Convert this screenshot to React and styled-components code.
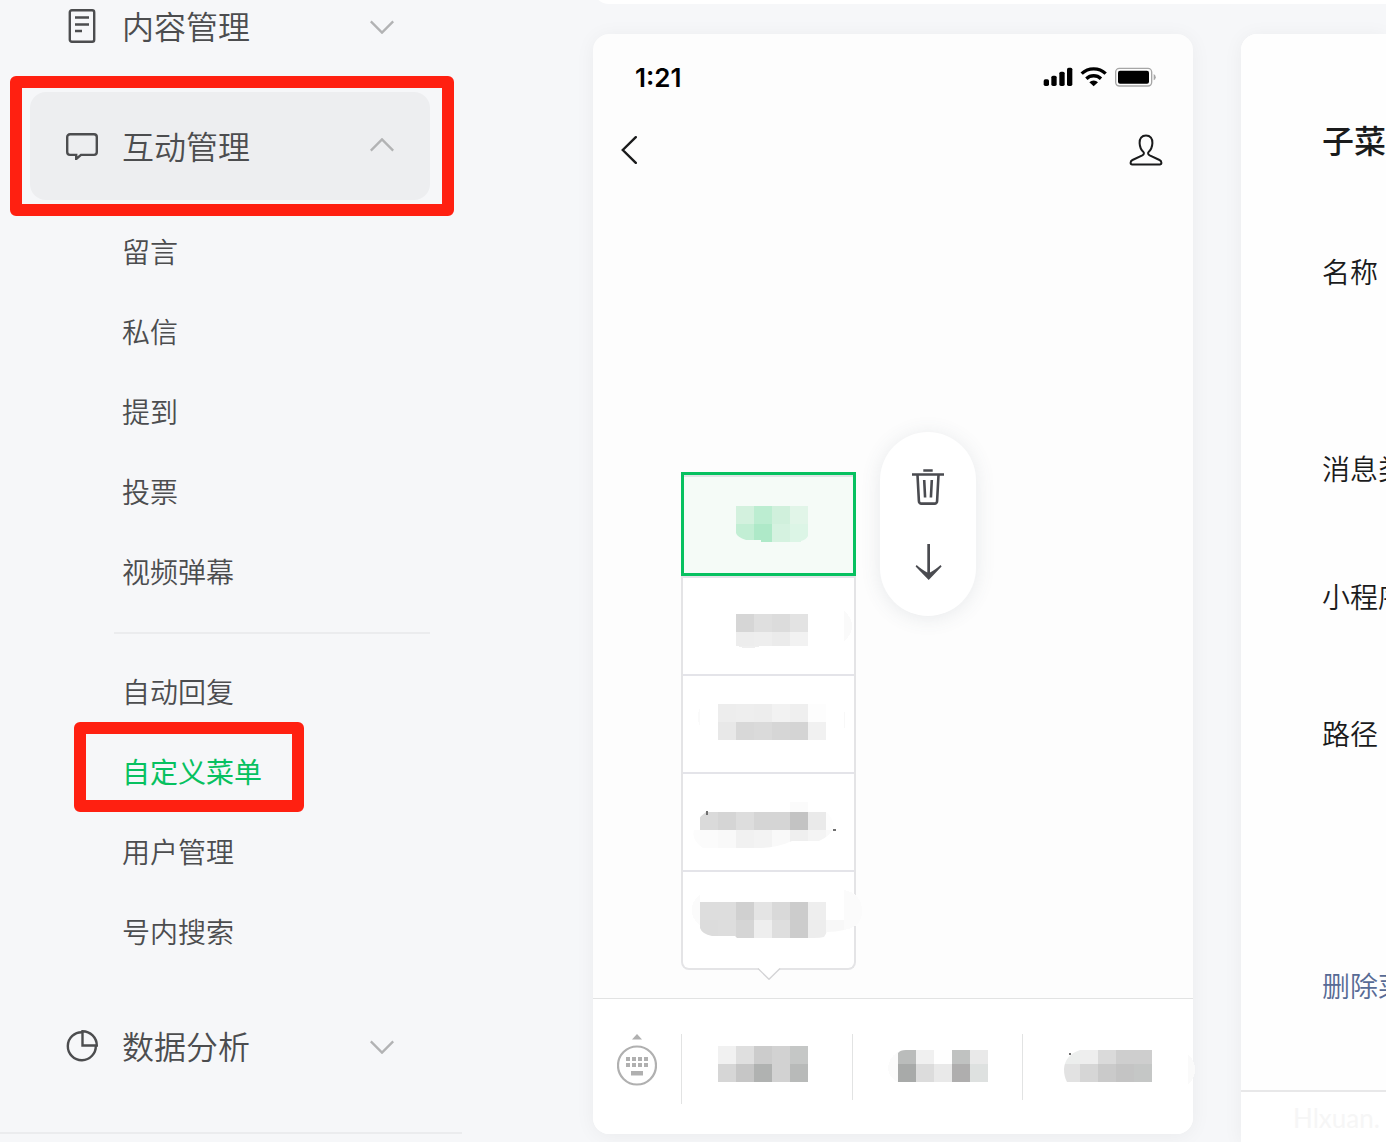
import React, { useState } from "react";
import styled, { createGlobalStyle, css } from "styled-components";

const GlobalStyle = createGlobalStyle`
  *, *::before, *::after {
    box-sizing: border-box;
  }
  body {
    margin: 0;
    background: #f6f7f9;
    color: #1a1b1c;
    font-family: "Noto Sans CJK SC", "Noto Sans", sans-serif;
    font-weight: 350;
    overflow: hidden;
  }
  button {
    padding: 0;
    border: 0;
    background: none;
    color: inherit;
    font: inherit;
    cursor: pointer;
  }
  a {
    color: inherit;
    text-decoration: none;
  }
  ul {
    margin: 0;
    padding: 0;
    list-style: none;
  }
  svg {
    display: block;
    flex: none;
  }
`;

const Page = styled.div`
  display: grid;
  grid-template-columns: 462px minmax(0, 1fr);
  min-height: 100vh;
`;

/* ---------- sidebar ---------- */

const marked = css`
  position: relative;
  &::after {
    content: "";
    position: absolute;
    inset: ${(p) => p.$inset};
    border: 12px solid #ff2011;
    border-radius: 6px;
    pointer-events: none;
  }
`;

const Sidebar = styled.nav`
  display: flex;
  flex-direction: column;
  gap: 12px;
  margin-top: -28px;
  padding: 0 32px 0 30px;
  color: #4c4d4f;
`;

const GroupButton = styled.button`
  display: flex;
  align-items: center;
  gap: 24px;
  width: 100%;
  min-height: 108px;
  padding: 0 36px;
  border-radius: 16px;
  background: ${(p) => (p.$active ? "#edeef0" : "transparent")};
  font-size: 32px;
  line-height: 48px;
  text-align: left;
  ${(p) => p.$inset && marked}
`;

const GroupName = styled.span`
  flex: 1;
  padding-bottom: 2px;
`;

const SubList = styled.ul`
  margin-left: 84px;
  padding: 12px 0 8px;
`;

const SubItem = styled.li`
  & + &[data-split] {
    margin-top: 20px;
    padding-top: 18px;
    border-top: 2px solid #ebecee;
  }
`;

const SubLink = styled.a`
  display: flex;
  align-items: center;
  width: max-content;
  height: 80px;
  padding: 0 8px 2px;
  font-size: 28px;
  line-height: 40px;
  ${(p) => p.$active && "color: #07c160; font-weight: 400;"}
  ${(p) => p.$inset && marked}
`;

const SidebarEnd = styled.hr`
  width: 462px;
  height: 2px;
  margin: 20px 0 0 -30px;
  border: 0;
  background: #ebecee;
`;

/* ---------- main column ---------- */

const Main = styled.main`
  display: flex;
  flex-direction: column;
  gap: 30px;
  padding-left: 131px;
`;

const TopCard = styled.div`
  height: 32px;
  margin-top: -28px;
  border-radius: 0 0 0 16px;
  background: #fff;
`;

const Workspace = styled.div`
  display: flex;
  flex: 1;
  gap: 48px;
`;

const Phone = styled.section`
  display: flex;
  flex: none;
  flex-direction: column;
  width: 600px;
  min-height: calc(100vh - 42px);
  margin-bottom: 8px;
  border-radius: 16px;
  background: #fdfdfd;
  box-shadow: 0 2px 20px rgba(0, 0, 0, 0.05);
`;

const StatusBar = styled.div`
  display: flex;
  align-items: center;
  justify-content: space-between;
  height: 84px;
  padding: 2px 36px 0 42px;
  color: #000;
  font-family: Inter, sans-serif;
  font-size: 26px;
  font-weight: 600;
`;

const PhoneNav = styled.div`
  display: flex;
  align-items: center;
  justify-content: space-between;
  height: 64px;
  padding: 0 30px 0 28px;
`;

const MenuArea = styled.div`
  position: relative;
  width: 175px;
  margin: auto 0 28px 88px;
`;

const Menu = styled.ul`
  border: solid #e4e4e6;
  border-width: 0 2px 2px;
  border-radius: 0 0 8px 8px;
  background: #fff;
`;

const MenuEntry = styled.button`
  display: block;
  width: 100%;
  height: 98px;
  border-top: 2px solid #e4e4e9;
  ${(p) =>
    p.$selected &&
    css`
      width: 175px;
      height: 104px;
      margin: 0 -2px;
      border: 3px solid #07c160;
      background: #f5fbf7;
      box-shadow: inset 0 2px #e0e4e6;
    `}
`;

const MenuTail = styled.svg`
  position: absolute;
  left: 76px;
  bottom: -10px;
`;

const Actions = styled.div`
  position: absolute;
  top: -40px;
  left: 199px;
  display: flex;
  flex-direction: column;
  align-items: center;
  justify-content: space-between;
  width: 96px;
  height: 184px;
  padding: 37px 0 36px;
  border-radius: 48px;
  background: #fff;
  box-shadow: 0 2px 20px rgba(70, 90, 110, 0.12);
`;

const MenuBar = styled.div`
  display: flex;
  min-height: 136px;
  padding-top: 35px;
  border-top: 1px solid #e2e3e3;
  border-radius: 0 0 16px 16px;
  background: #fff;
`;

const KeyboardButton = styled.button`
  width: 88px;
  height: 52px;
  padding-left: 24px;
`;

const BarButton = styled.button`
  flex: 1;
  height: ${(p) => (p.$tall ? 70 : 66)}px;
  border-left: 1px solid #e2e3e3;
`;

/* ---------- settings panel ---------- */

const Panel = styled.section`
  display: flex;
  flex: 1;
  flex-direction: column;
  min-width: 0;
  border-radius: 16px 0 0 0;
  background: #fff;
  box-shadow: 0 2px 20px rgba(0, 0, 0, 0.05);
  white-space: nowrap;
  overflow: hidden;
`;

const PanelBody = styled.div`
  flex: 1;
  padding: 81px 0 0 81px;
  background: #fefefe;
`;

const PanelTitle = styled.h2`
  margin: 0;
  font-size: 32px;
  font-weight: 500;
  line-height: 48px;
`;

const Field = styled.div`
  margin-top: ${(p) => p.$space}px;
  font-size: 28px;
  line-height: 40px;
`;

const DeleteLink = styled.a`
  color: #576b95;
`;

const PanelFoot = styled.div`
  min-height: 52px;
  padding: 8px 0 0 52px;
  border-top: 2px solid #e8e8e9;
  color: #f6f6f6;
  font-family: Lato, sans-serif;
  font-size: 26px;
  font-weight: 400;
  line-height: 36px;
`;

/* ---------- icons ---------- */

const Chevron = ({ up }) => (
  <svg width="24" height="16" viewBox="0 0 24 16" fill="none" stroke="#b2b3b4" strokeWidth="2.4">
    <path d={up ? "M.8 12.600 12 1.400l11.200 11.200" : "M.8 3.400 12 14.600 23.200 3.400"} />
  </svg>
);

const DocIcon = () => (
  <svg width="32" height="34" viewBox="0 0 32 34" fill="none" stroke="currentColor" strokeWidth="2.4">
    <rect x="3.800" y="1.300" width="24.400" height="31.400" rx="2" />
    <path d="M9 8.500h14M9 15.500h14M9 22h7" />
  </svg>
);

const ChatIcon = () => (
  <svg width="32" height="28" viewBox="0 0 32 28" fill="none" stroke="currentColor" strokeWidth="2.4">
    <path d="M4 2.300h24a2.800 2.800 0 0 1 2.800 2.800v15a2.800 2.800 0 0 1-2.800 2.800H15L10.200 27v-4.100H4a2.800 2.800 0 0 1-2.800-2.800v-15A2.800 2.800 0 0 1 4 2.300Z" />
  </svg>
);

const PieIcon = () => (
  <svg width="32" height="32" viewBox="0 0 32 32" fill="none" stroke="currentColor" strokeWidth="2.4">
    <path d="M16.500 2.200A14 14 0 1 0 29.800 15.500" />
    <path d="M16.500 1.200v14.300h14.300A14.300 14.300 0 0 0 16.500 1.200Z" />
  </svg>
);

const StatusIcons = () => (
  <svg width="114" height="20" viewBox="0 0 342 60" role="img" aria-label="status">
    <rect x="2" y="37" width="16" height="20" rx="5" />
    <rect x="25" y="26" width="16" height="31" rx="5" />
    <rect x="49" y="14" width="16" height="43" rx="5" />
    <rect x="72" y="2" width="16" height="55" rx="5" />
    <g fill="none" stroke="#000" strokeWidth="10">
      <path d="M116 20a52 52 0 0 1 72 0" />
      <path d="M130 35a32 32 0 0 1 44 0" />
    </g>
    <path d="M139 46a19 19 0 0 1 26 0L152 58Z" />
    <rect x="218" y="4" width="108" height="53" rx="11" fill="none" stroke="#a6a6a6" strokeWidth="4" />
    <rect x="225" y="11" width="93" height="39" rx="6" />
    <path d="M332 21a9 10 0 0 1 0 19Z" fill="#a6a6a6" />
  </svg>
);

const BackIcon = () => (
  <svg width="16" height="28" viewBox="0 0 16 28" fill="none" stroke="#1a1b1c" strokeWidth="2.400">
    <path d="M14.800 1.200 1.800 14l13 12.800" strokeLinecap="round" />
  </svg>
);

const PersonIcon = () => (
  <svg width="34" height="32" viewBox="0 0 34 32" fill="none" stroke="#1a1b1c" strokeWidth="2">
    <path d="M17 1.500c-4.300 0-6.700 3-6.400 7.600.2 4 1.500 6.700 3.700 8.800 1.100 1.200.7 2.600-1 3.500L3.500 26c-1.400.7-1.900 1.500-1.900 2.800 0 1.300.5 1.700 1.600 1.700h27.600c1.100 0 1.600-.4 1.600-1.700 0-1.300-.5-2.100-1.900-2.800l-9.800-4.600c-1.700-.9-2.100-2.300-1-3.500 2.200-2.100 3.500-4.800 3.700-8.800.3-4.600-2.100-7.600-6.400-7.600Z" />
  </svg>
);

const TrashIcon = () => (
  <svg width="32" height="36" viewBox="0 0 32 36" fill="none" stroke="#4a4b50" strokeWidth="2.600">
    <path d="M11.300 1.500h9.400M0 5.500h32" />
    <path d="m5.500 6 1.400 26a2.500 2.500 0 0 0 2.500 2.600h13.200a2.500 2.500 0 0 0 2.500-2.600L26.500 6" />
    <path d="m12.200 11 .9 17.500M19.800 11l-.9 17.500" />
  </svg>
);

const ArrowIcon = () => (
  <svg width="28" height="36" viewBox="0 0 28 36" fill="#4a4b50">
    <path d="M13.300 0h2.700v28.500c3.500-1.700 7-4.200 10.600-7.500l1 1.400L14.700 36 1.600 22.400l1-1.400c3.600 3.300 7.200 5.800 10.700 7.500Z" />
  </svg>
);

const KeyboardIcon = () => (
  <svg width="40" height="52" viewBox="0 0 40 52" fill="#b0b0b0">
    <path d="M15 5.500 20 0l5 5.500Z" />
    <circle cx="20" cy="31.500" r="19" fill="none" stroke="#b0b0b0" strokeWidth="2.200" />
    {[9, 15, 21, 27].map((x) => (
      <path key={x} d={`M${x} 23h4v4h-4zM${x} 29h4v4h-4z`} />
    ))}
    <path d="M14 37h12v4.500H14z" />
  </svg>
);

/* ---------- blurred labels ---------- */

// every line is [x, y, height, ...colours], one colour for each 18px block
const MENU_LABELS = [
  {
    clip: "M52 30h72v30q-2 4-7 5v1H77v-2H62q-9-3-10-7Z",
    lines: [
      [52, 30, 18, "#d3f1de", "#bcedd1", "#d0f0dc", "#e1f5e8"],
      [52, 48, 18, "#c2eed4", "#aee9c8", "#d5f2e0", "#dcf5e6"],
    ],
  },
  {
    lines: [
      [53, 36, 18, "#d6d6d6", "#dfdfdf", "#dcdcdc", "#e3e3e3"],
      [53, 54, 14, "#ededed", "#eeeeee", "#ebebeb", "#f2f2f2"],
    ],
    blobs: [
      ["M54 68h24q-5 2-12 2t-12-2Z", "#efefef"],
      ["M161 33q8 6 8 15t-8 15Z", "#fafafa"],
    ],
  },
  {
    lines: [
      [35, 28, 18, "#ededed", "#eeeeee", "#ededed", "#f2f2f2", "#efefef", "#fdfdfd"],
      [35, 46, 18, "#e8e8e8", "#d8d8d8", "#dadada", "#d6d6d6", "#d4d4d4", "#f1f1f1"],
    ],
    blobs: [
      ["M17 32q-4 9 0 18Z", "#fafafa"],
      ["M161 36h1v16h-1Z", "#f8f8f8"],
    ],
  },
  {
    clip: "M107 28h18v10h18q6 4 8 14-3 10-15 15h-27q-15 7-35 7H20q-12-8-9-18 2-11 12-18h84Z",
    lines: [
      [107, 28, 10, "#fbfbfb"],
      [17, 38, 18, "#dadada", "#d5d5d5", "#dddddd", "#d5d5d5", "#d5d5d5", "#c3c3c3", "#eaeaea", "#fdfdfd"],
      [-1, 56, 18, "#fcfcfc", "#fbfbfb", "#f9f9f9", "#f1f1f1", "#f3f3f3", "#f9f9f9", "#efefef", "#f4f4f4", "#f9f9f9"],
    ],
    dots: [
      [23, 37, 2, 4],
      [150, 55, 3, 2],
    ],
  },
  {
    clip: "M17 30h126v18h18v10q-8 2-17 2l-3 5q-4 1-10 1H54l-2-2H29q-10-2-12-8Z",
    lines: [
      [17, 30, 18, "#dddddd", "#dddddd", "#d0d0d0", "#e4e4e4", "#d9d9d9", "#cccccc", "#eeeeee"],
      [17, 48, 18, "#dcdcdc", "#dddddd", "#d5d5d5", "#eeeeee", "#dedede", "#cccccc", "#ededed", "#f8f8f8"],
    ],
    blobs: [
      ["M161 18q17 3 18 20t-18 20Z", "#fbfbfb"],
      ["M17 22Q0 38 17 54Z", "#fbfbfb"],
    ],
  },
];

const BAR_LABELS = [
  {
    lines: [
      [36, 10, 18, "#f1f1f1", "#dfdfdf", "#cccccc", "#d2d2d2", "#c5c7c6"],
      [36, 28, 18, "#d6d6d6", "#c6c6c6", "#b0b2b1", "#d2d2d2", "#b8bab9"],
    ],
  },
  {
    lines: [
      [45, 16, 14, "#babcbb", "#f0f0f0", "#fefefe", "#c0c2c1", "#e9e9e9"],
      [45, 30, 18, "#a8aaa9", "#dcdcdc", "#e9e9e9", "#afaeae", "#dee1e0"],
    ],
    blobs: [["M45 18q-10 6-10 17 1 9 10 13Z", "#fbfbfb"]],
    clip: "M45 19q2-3 8-3h82v32H45Z",
  },
  {
    clip: "M129 16v32H44q-3-5-3-13 1-14 16-19Z",
    lines: [
      [39, 16, 14, "#eceeed", "#eeeeee", "#dadada", "#cecece", "#cecece"],
      [39, 30, 18, "#e2e2e2", "#d6d6d6", "#cacaca", "#c4c4c4", "#c5c7c6"],
    ],
    blobs: [["M165 20q7 6 7 15t-7 16Z", "#fafafa"]],
    dots: [[46, 19, 2, 2]],
  },
];

const Mosaic = ({ id, width, height, label }) => (
  <svg width={width} height={height} overflow="visible" shapeRendering="crispEdges" aria-hidden="true">
    {label.clip && (
      <clipPath id={id}>
        <path d={label.clip} />
      </clipPath>
    )}
    {label.blobs?.map(([d, fill]) => (
      <path key={d} d={d} fill={fill} />
    ))}
    <g clipPath={label.clip && `url(#${id})`}>
      {label.lines.map(([x, y, h, ...fills]) =>
        fills.map((fill, i) => (
          <rect key={`${y}-${i}`} x={x + i * 18} y={y} width="18" height={h} fill={fill} />
        ))
      )}
    </g>
    {label.dots?.map(([x, y, w, h]) => (
      <rect key={x} x={x} y={y} width={w} height={h} fill="#707070" />
    ))}
  </svg>
);

const SUB_ITEMS = [
  { name: "留言" },
  { name: "私信" },
  { name: "提到" },
  { name: "投票" },
  { name: "视频弹幕" },
  { name: "自动回复", split: true },
  { name: "自定义菜单", inset: "-10px -34px 0 -40px" },
  { name: "用户管理" },
  { name: "号内搜索" },
];

const App = () => {
  const [current, setCurrent] = useState("自定义菜单");
  const [selected, setSelected] = useState(0);

  return (
    <Page>
      <GlobalStyle />
      <Sidebar>
        <GroupButton type="button">
          <DocIcon />
          <GroupName>内容管理</GroupName>
          <Chevron />
        </GroupButton>
        <div>
          <GroupButton type="button" $active $inset="-16px -24px -16px -20px" aria-expanded="true">
            <ChatIcon />
            <GroupName>互动管理</GroupName>
            <Chevron up />
          </GroupButton>
          <SubList>
            {SUB_ITEMS.map(({ name, split, inset }) => (
              <SubItem key={name} data-split={split}>
                <SubLink href="#" $active={name === current} $inset={inset} onClick={() => setCurrent(name)}>
                  {name}
                </SubLink>
              </SubItem>
            ))}
          </SubList>
        </div>
        <GroupButton type="button">
          <PieIcon />
          <GroupName>数据分析</GroupName>
          <Chevron />
        </GroupButton>
        <SidebarEnd />
      </Sidebar>

      <Main>
        <TopCard />
        <Workspace>
          <Phone>
            <StatusBar>
              <span>1:21</span>
              <StatusIcons />
            </StatusBar>
            <PhoneNav>
              <button type="button" aria-label="返回">
                <BackIcon />
              </button>
              <button type="button" aria-label="账号">
                <PersonIcon />
              </button>
            </PhoneNav>
            <MenuArea>
              <Menu>
                {MENU_LABELS.map((label, i) => (
                  <li key={i}>
                    <MenuEntry
                      type="button"
                      aria-label={`子菜单 ${i + 1}`}
                      $selected={i === selected}
                      onClick={() => setSelected(i)}
                    >
                      <Mosaic id={`menu-${i}`} width={169} height={96} label={label} />
                    </MenuEntry>
                  </li>
                ))}
              </Menu>
              <MenuTail width="24" height="12" viewBox="0 0 24 12">
                <path d="M1 0 12 11 23 0Z" fill="#fff" />
                <path d="M1 .5 12 11.300 23 .5" fill="none" stroke="#d4d4d6" strokeWidth="1.400" />
              </MenuTail>
              <Actions>
                <button type="button" aria-label="删除">
                  <TrashIcon />
                </button>
                <button type="button" aria-label="下移">
                  <ArrowIcon />
                </button>
              </Actions>
            </MenuArea>
            <MenuBar>
              <KeyboardButton type="button" aria-label="键盘">
                <KeyboardIcon />
              </KeyboardButton>
              {BAR_LABELS.map((label, i) => (
                <BarButton key={i} type="button" aria-label={`菜单 ${i + 1}`} $tall={i === 0}>
                  <Mosaic id={`bar-${i}`} width={169} height={66} label={label} />
                </BarButton>
              ))}
            </MenuBar>
          </Phone>

          <Panel>
            <PanelBody>
              <PanelTitle>子菜单</PanelTitle>
              <Field $space={88}>名称</Field>
              <Field $space={157}>消息类型</Field>
              <Field $space={88}>小程序</Field>
              <Field $space={97}>路径</Field>
              <Field $space={212}>
                <DeleteLink href="#">删除菜单</DeleteLink>
              </Field>
            </PanelBody>
            <PanelFoot>Hlxuan.</PanelFoot>
          </Panel>
        </Workspace>
      </Main>
    </Page>
  );
};

export default App;
